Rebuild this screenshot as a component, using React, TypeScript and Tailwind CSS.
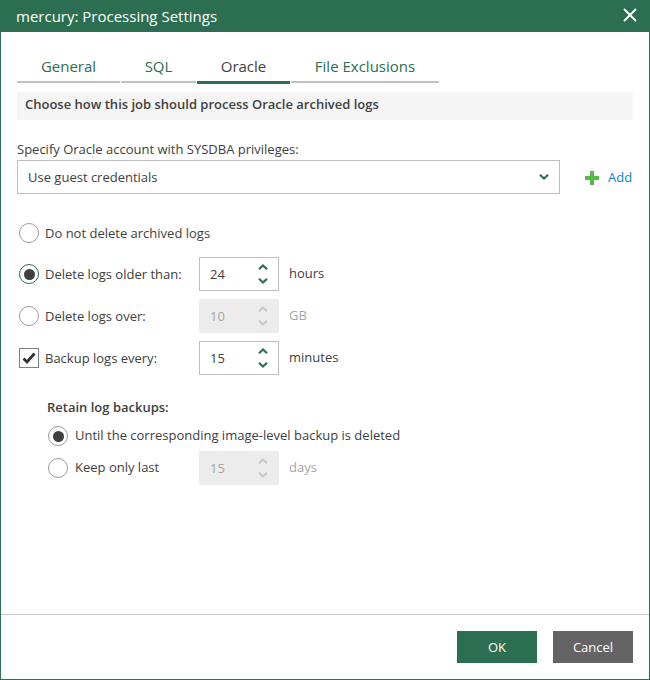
import { X } from "lucide-react";

function Chevron({ up, color }: { up?: boolean; color: string }) {
  return (
    <svg width="12" height="8" viewBox="0 0 12 8" className={color}>
      <path d={up ? "M2 6.2 L6 2.4 L10 6.2" : "M2 1.8 L6 5.6 L10 1.8"} fill="none" stroke="currentColor" strokeWidth="2.2" />
    </svg>
  );
}

function Radio({ checked, active }: { checked?: boolean; active?: boolean }) {
  return (
    <span className={`flex h-5 w-5 shrink-0 items-center justify-center rounded-full border bg-white ${active ? "border-[#2b6e51]" : "border-[#9a9a9a]"}`}>
      {checked && <span className="h-[11px] w-[11px] rounded-full bg-[#404040]" />}
    </span>
  );
}

function Spinner({ value, disabled }: { value: string; disabled?: boolean }) {
  const arrow = disabled ? "text-[#c8c8c8]" : "text-[#2b6e51]";
  return (
    <div className={`flex h-[34px] w-20 shrink-0 items-center justify-between ${disabled ? "bg-[#ececec] pl-[11px] pr-[10px] text-[#a6a6a6]" : "border border-[#bdbdbd] bg-white pl-[10px] pr-[9px] text-[#404040]"}`}>
      <span className="pt-px">{value}</span>
      <div className="flex flex-col gap-[6px]">
        <Chevron up color={arrow} />
        <Chevron color={arrow} />
      </div>
    </div>
  );
}

function SpinRow({ control, label, value, unit, disabled, className }: { control: React.ReactNode; label: string; value: string; unit: string; disabled?: boolean; className?: string }) {
  return (
    <div className={`flex h-[34px] items-center ${className ?? ""}`}>
      <div className="flex w-[180px] items-center gap-[6px]">
        {control}
        <span className="pt-px">{label}</span>
      </div>
      <Spinner value={value} disabled={disabled} />
      <span className={`ml-[10px] -mt-[1px] ${disabled ? "text-[#a6a6a6]" : ""}`}>{unit}</span>
    </div>
  );
}

const tabs = [
  { name: "General", width: "w-[103px]" },
  { name: "SQL", width: "w-[75px]" },
  { name: "Oracle", width: "w-[93px]", active: true },
  { name: "File Exclusions", width: "w-[148px]" },
];

export default function App() {
  return (
    <div className="flex h-[680px] w-[650px] flex-col border-x border-b border-[#2b6e51] bg-white text-[13px] text-[#404040] [font-family:'Open_Sans',sans-serif]">
      {/* Title bar */}
      <div className="-mx-px flex h-8 shrink-0 items-center justify-between bg-[#2b6e51] pl-[16px] pr-[9px] text-[15px] text-white">
        <span>mercury: Processing Settings</span>
        <X size={22} strokeWidth={2} className="-mt-[2px]" />
      </div>

      <div className="flex-1 px-4">
        {/* Tabs */}
        <div className="mt-[22px] flex gap-px">
          {tabs.map((t) => (
            <div
              key={t.name}
              className={`${t.width} pb-[3px] text-center text-[15px] leading-[24px] ${t.active ? "border-b-[3px] border-[#2b6e51] text-[#404040]" : "mb-px border-b-2 border-[#c0c0c0] text-[#2b6e51]"}`}
            >
              {t.name}
            </div>
          ))}
        </div>

        <div className="mt-2 flex h-7 items-center bg-[#f5f5f5] px-2 pb-[2px] font-semibold">
          Choose how this job should process Oracle archived logs
        </div>

        <div className="mt-5 leading-[18px]">Specify Oracle account with SYSDBA privileges:</div>
        <div className="mt-[2px] flex items-center">
          <div className="flex h-[34px] w-[543px] items-center justify-between border border-[#bdbdbd] pl-[10px] pr-[9px]">
            <span className="pt-px">Use guest credentials</span>
            <Chevron color="text-[#2b6e51]" />
          </div>
          <svg width="14" height="14" viewBox="0 0 14 14" className="ml-[25px] mt-[2px] text-[#54b948]">
            <path d="M5 0h4v5h5v4H9v5H5V9H0V5h5z" fill="currentColor" />
          </svg>
          <span className="ml-[9px] mt-[2px] text-[#0f82c5]">Add</span>
        </div>

        <div className="mt-[29px] ml-[2px] flex h-5 items-center gap-[6px]">
          <Radio />
          <span className="pt-px">Do not delete archived logs</span>
        </div>

        <SpinRow className="mt-[14px] ml-[2px]" control={<Radio checked active />} label="Delete logs older than:" value="24" unit="hours" />
        <SpinRow className="mt-2 ml-[2px]" control={<Radio />} label="Delete logs over:" value="10" unit="GB" disabled />
        <SpinRow
          className="mt-2 ml-[2px]"
          control={
            <span className="flex h-5 w-5 shrink-0 items-center justify-center border border-[#808080]">
              <svg width="14" height="12" viewBox="0 0 14 12" className="text-[#333333]">
                <path d="M1.5 6.5 L5 10 L12.5 1.5" fill="none" stroke="currentColor" strokeWidth="2.8" />
              </svg>
            </span>
          }
          label="Backup logs every:"
          value="15"
          unit="minutes"
        />

        <div className="mt-[23px] ml-[30px] font-semibold leading-[18px]">Retain log backups:</div>
        <div className="mt-[10px] ml-[31px] flex h-5 items-center gap-[7px]">
          <Radio checked />
          <span>Until the corresponding image-level backup is deleted</span>
        </div>
        <div className="mt-[5px] ml-[31px] flex h-[34px] items-center">
          <div className="flex w-[151px] items-center gap-[7px]">
            <Radio />
            <span>Keep only last</span>
          </div>
          <Spinner value="15" disabled />
          <span className="ml-[10px] -mt-[1px] text-[#a6a6a6]">days</span>
        </div>
      </div>

      {/* Footer */}
      <div className="flex h-[65px] shrink-0 items-start justify-end gap-4 border-t border-[#c8c8c8] pt-4 pr-4">
        <button className="h-8 w-20 bg-[#2b6e51] pt-px text-white">OK</button>
        <button className="h-8 w-20 bg-[#646464] pt-px text-white">Cancel</button>
      </div>
    </div>
  );
}
